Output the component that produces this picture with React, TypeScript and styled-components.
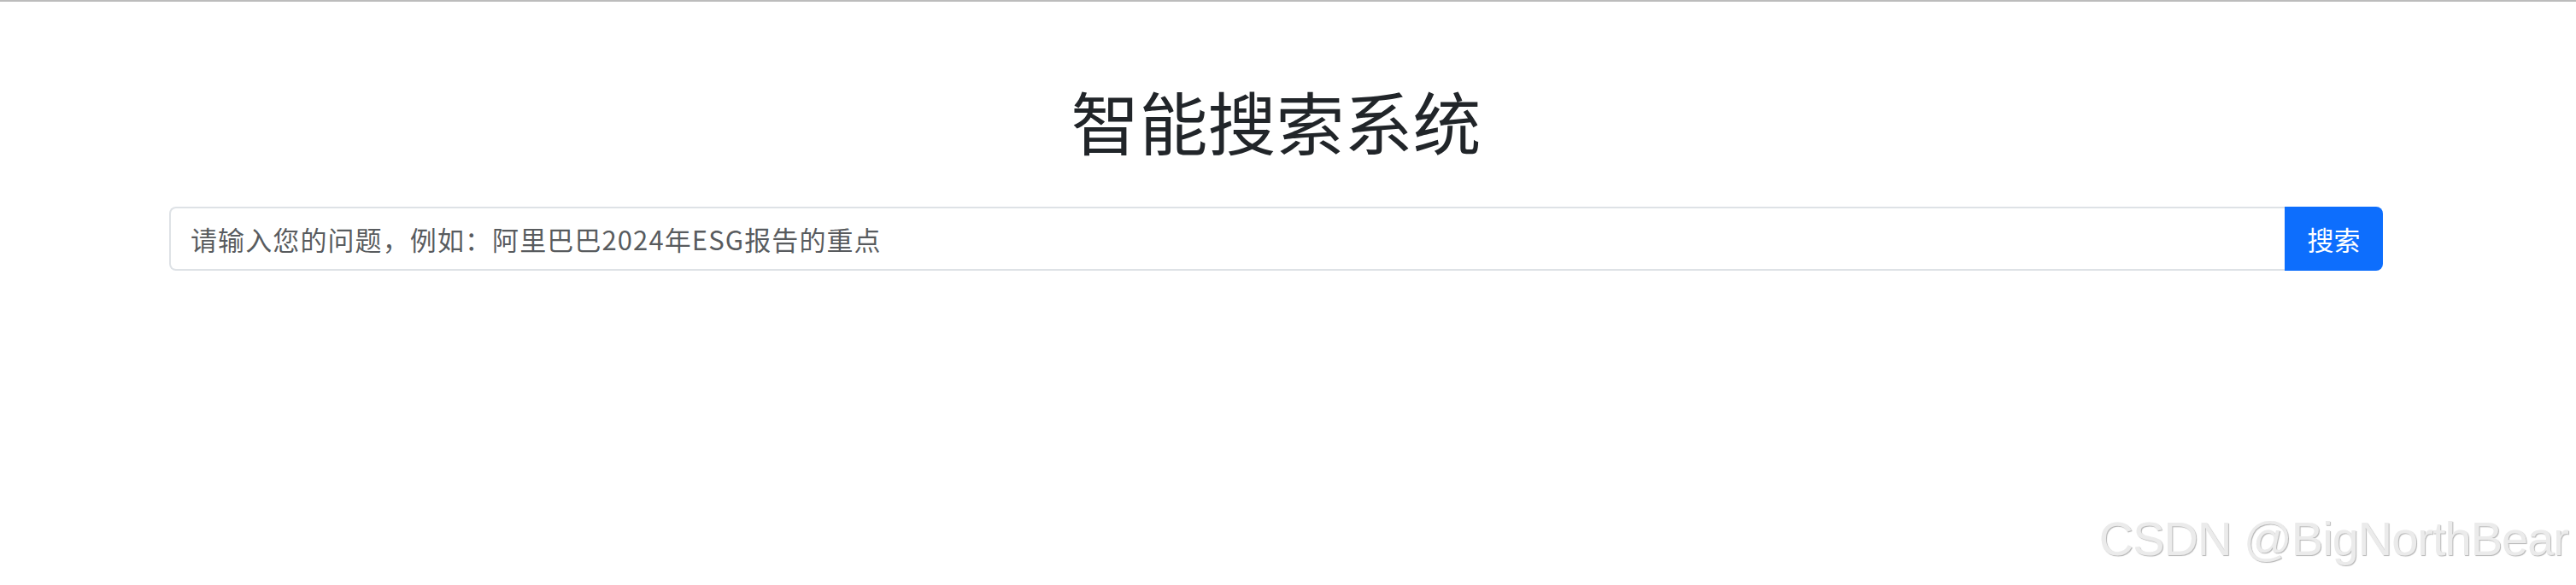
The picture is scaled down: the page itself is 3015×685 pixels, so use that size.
import React, { useState } from 'react';
import styled, { createGlobalStyle } from 'styled-components';

const GlobalStyle = createGlobalStyle`
  html, body {
    margin: 0;
    padding: 0;
    background: #ffffff;
  }
  body {
    font-family: "Liberation Sans", "Noto Sans CJK SC", sans-serif;
    color: #212529;
  }
`;

const Page = styled.div`
  position: relative;
  min-height: 685px;
  box-sizing: border-box;
  border-top: 2px solid #bcbcbc;
`;

const Main = styled.main`
  display: flex;
  flex-direction: column;
  align-items: stretch;
  padding: 90px 226px 0 198px;
`;

const Title = styled.h1`
  margin: 0 0 54px;
  text-align: center;
  font-family: "Noto Sans CJK SC", sans-serif;
  font-size: 80px;
  font-weight: 400;
  line-height: 96px;
  color: #212529;
`;

const SearchForm = styled.form`
  display: flex;
  height: 75px;
`;

const SearchInput = styled.input`
  flex: 1;
  min-width: 0;
  box-sizing: border-box;
  height: 100%;
  padding: 0 23px;
  border: 2px solid #dee2e6;
  border-right: none;
  border-radius: 8px 0 0 8px;
  font-family: "Noto Sans CJK SC", sans-serif;
  font-size: 31px;
  letter-spacing: 1.1px;
  color: #212529;
  outline: none;

  &::placeholder {
    color: rgba(33, 37, 41, 0.75);
  }
`;

const SearchButton = styled.button`
  flex: none;
  width: 115px;
  height: 100%;
  border: none;
  border-radius: 0 8px 8px 0;
  background: #0d6efd;
  color: #ffffff;
  font-family: "Noto Sans CJK SC", sans-serif;
  font-size: 31px;
  cursor: pointer;
`;

const Watermark = styled.div`
  position: absolute;
  right: 9px;
  bottom: 22px;
  font-family: "Liberation Sans Narrow", "Liberation Sans", sans-serif;
  font-size: 56px;
  letter-spacing: -1px;
  color: #ebebeb;
  text-shadow: 1px 1px 1px #b5b5b5;
  pointer-events: none;
`;

const App: React.FC = () => {
  const [query, setQuery] = useState('');

  return (
    <Page>
      <GlobalStyle />
      <Main>
        <Title>智能搜索系统</Title>
        <SearchForm onSubmit={(e) => e.preventDefault()}>
          <SearchInput
            value={query}
            onChange={(e) => setQuery(e.target.value)}
            placeholder="请输入您的问题，例如：阿里巴巴2024年ESG报告的重点"
          />
          <SearchButton type="submit">搜索</SearchButton>
        </SearchForm>
      </Main>
      <Watermark>CSDN @BigNorthBear</Watermark>
    </Page>
  );
};

export default App;
